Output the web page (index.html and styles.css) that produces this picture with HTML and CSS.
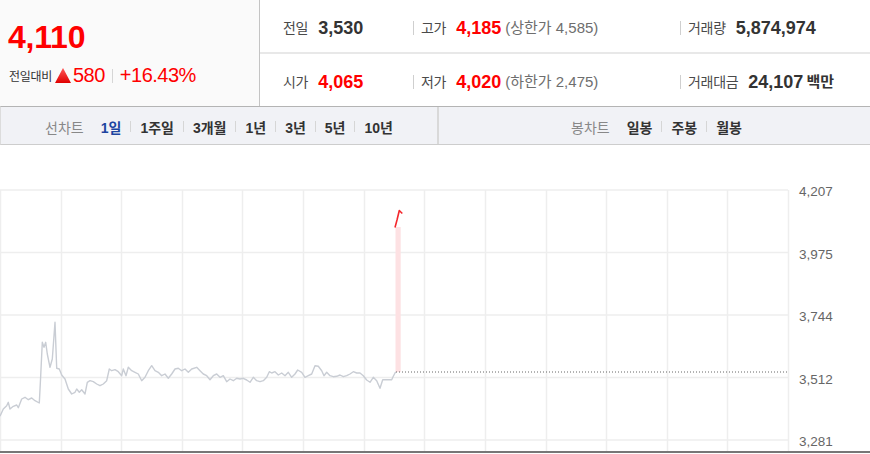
FILE: index.html
```html
<!DOCTYPE html>
<html lang="ko">

<head>
	<meta charset="UTF-8">
	<meta name="viewport" content="width=device-width, initial-scale=1.0">
	<title>시세</title>
	<link rel="stylesheet" href="styles.css">
</head>

<body>
	<div class="quote">
		<div class="now">
			<div class="price">4,110</div>
			<div class="change">
				<span class="change-label">전일대비</span>
				<svg class="tri" width="16" height="15" viewBox="0 0 16 15">
					<defs>
						<linearGradient id="triFill" x1="0" y1="0" x2="0" y2="1">
							<stop offset="0" stop-color="#ff5a5a"/>
							<stop offset="1" stop-color="#e00000"/>
						</linearGradient>
					</defs>
					<polygon points="8,0 16,15 0,15" fill="url(#triFill)"/>
				</svg>
				<span class="change-amt">580</span>
				<span class="change-bar"></span>
				<span class="change-rate">+16.43%</span>
			</div>
		</div>
		<div class="info">
			<div class="row first">
				<div class="cell c1"><span class="k">전일</span><b class="v">3,530</b></div>
				<div class="cell c2"><span class="sep"></span><span class="k">고가</span><b class="v up">4,185</b><span class="lim">(상한가 4,585)</span></div>
				<div class="cell c3"><span class="sep"></span><span class="k">거래량</span><b class="v">5,874,974</b></div>
			</div>
			<div class="row">
				<div class="cell c1"><span class="k">시가</span><b class="v up">4,065</b></div>
				<div class="cell c2"><span class="sep"></span><span class="k">저가</span><b class="v up">4,020</b><span class="lim">(하한가 2,475)</span></div>
				<div class="cell c3"><span class="sep"></span><span class="k">거래대금</span><b class="v">24,107</b><span class="unit">백만</span></div>
			</div>
		</div>
	</div>

	<div class="tabs">
		<div class="tab-group line">
			<span class="tab-title">선차트</span>
			<a class="tab on">1일</a><span class="tsep"></span>
			<a class="tab">1주일</a><span class="tsep"></span>
			<a class="tab">3개월</a><span class="tsep"></span>
			<a class="tab">1년</a><span class="tsep"></span>
			<a class="tab">3년</a><span class="tsep"></span>
			<a class="tab">5년</a><span class="tsep"></span>
			<a class="tab">10년</a>
		</div>
		<div class="tab-group candle">
			<span class="tab-title">봉차트</span>
			<a class="tab">일봉</a><span class="tsep"></span>
			<a class="tab">주봉</a><span class="tsep"></span>
			<a class="tab">월봉</a>
		</div>
	</div>

	<div class="chart">
		<svg id="chart" width="870" height="308" viewBox="0 0 870 308"></svg>
	</div>

	<script src="chart.js"></script>
</body>

</html>
```

FILE: styles.css
```css
html {
	font-size: 14px;
}

body {
	margin: 0;
	width: 870px;
	height: 454px;
	overflow: hidden;
	background: #fff;
	font-family: "Liberation Sans", "Noto Sans CJK KR", sans-serif;
	color: #333;
}

.quote {
	display: flex;
	height: 106px;
}

.now {
	width: 260px;
	flex: none;
	background: #fafafa;
	border-right: 1px solid #c4c4c4;
	padding: 19px 0 0 8px;
	box-sizing: border-box;
}

.price {
	color: #f00;
	font-size: 32px;
	font-weight: bold;
	line-height: 36px;
	letter-spacing: -0.2px;
}

.change {
	display: flex;
	align-items: center;
	margin-top: 9px;
	height: 22px;
}

.change-label {
	font-size: 12px;
	letter-spacing: -0.3px;
	color: #333;
	margin-right: 3px;
	margin-left: 1px;
}

.tri {
	margin-right: 2px;
	margin-top: 1px;
}

.change-amt,
.change-rate {
	color: #f00;
	font-size: 20px;
	line-height: 22px;
	letter-spacing: -0.5px;
}

.change-bar {
	width: 1px;
	height: 14px;
	background: #d6d6d6;
	margin: 2px 7px 0 7px;
}

.info {
	flex: 1;
}

.row {
	display: flex;
	height: 52px;
	align-items: center;
	padding-top: 3px;
	box-sizing: border-box;
}

.row.first {
	height: 54px;
	border-bottom: 2px solid #e8e8e8;
}

.cell {
	display: flex;
	align-items: center;
	line-height: 20px;
}

.c1 {
	width: 153px;
	padding-left: 23px;
	box-sizing: border-box;
}

.c2 {
	width: 267px;
}

.c3 {
	flex: 1;
}

.sep {
	width: 1px;
	height: 14px;
	background: #cfcfcf;
	margin-right: 7px;
}

.k {
	font-size: 14px;
	color: #4a4a4a;
	letter-spacing: -0.3px;
	margin-right: 10px;
}

.v {
	font-size: 18px;
	font-weight: bold;
	color: #333;
}

.v.up {
	color: #f00;
}

.lim {
	font-size: 15px;
	color: #6e6e6e;
	margin-left: 4px;
}

.unit {
	font-size: 15px;
	font-weight: bold;
	color: #333;
	margin-left: 3px;
}

.tabs {
	display: flex;
	height: 39px;
	background: #f1f2f6;
	border-top: 1px solid #b4b4b4;
	border-bottom: 1px solid #cdcdcd;
	border-left: 1px solid #dcdcdc;
	box-sizing: border-box;
}

.tab-group {
	display: flex;
	align-items: center;
	justify-content: center;
	padding-top: 2px;
}

.tab-group.line {
	width: 436px;
	border-right: 2px solid #d9d9d9;
}

.tab-group.candle {
	flex: 1;
	padding-left: 4px;
}

.tab-title {
	font-size: 14px;
	color: #888;
	margin-right: 17px;
}

.tab {
	font-size: 14px;
	font-weight: bold;
	color: #333;
}

.tab.on {
	color: #1d45a0;
}

.tsep {
	width: 1px;
	height: 11px;
	background: #d6d6d6;
	margin: 0 9px;
}

.chart {
	height: 308px;
}

.chart svg {
	display: block;
}

.grid {
	stroke: #eeeeee;
	stroke-width: 1.5;
}

.ylabel {
	font-family: "Liberation Sans", sans-serif;
	font-size: 13.5px;
	fill: #666;
}
```

FILE: chart.js
```js
const NS = "http://www.w3.org/2000/svg"
const svg = document.getElementById("chart")

function el(name, attrs) {
	const e = document.createElementNS(NS, name)
	Object.entries(attrs).forEach(([k, v]) => e.setAttribute(k, v))
	svg.appendChild(e)
	return e
}

// grid: 13 half-hour slots, 5 price levels
const right = 788
const labels = ["4,207", "3,975", "3,744", "3,512", "3,281"]
for (let i = 0; i <= 13; i++) {
	const x = Math.round(i * right / 13) + 0.5
	el("line", {x1: x, y1: 45, x2: x, y2: 306, class: "grid"})
}
labels.forEach((t, i) => {
	const y = 45 + i * 62.5
	el("line", {x1: 0, y1: y, x2: right, y2: y, class: "grid"})
	const label = el("text", {x: 799, y: y + 6, class: "ylabel"})
	label.textContent = t
})

// intraday price (traced at 3x scale)
const pts = [
	[0,712],[10,690],[20,680],[25,670],[30,690],[40,682],[50,678],[55,686],[65,660],[75,655],
	[85,662],[95,657],[105,665],[118,672],[122,590],[127,490],[132,505],[137,490],[142,525],[150,565],
	[157,540],[165,430],[170,568],[178,570],[185,588],[195,600],[205,630],[215,645],[225,640],[230,630],
	[238,640],[245,632],[255,645],[262,610],[270,605],[280,608],[290,615],[300,620],[310,615],[320,605],
	[328,570],[335,575],[345,572],[355,578],[365,590],[370,570],[378,590],[385,565],[395,575],[405,580],
	[415,585],[425,605],[435,595],[445,575],[455,560],[465,575],[475,580],[485,590],[495,585],[505,598],
	[515,585],[525,570],[535,568],[545,575],[555,570],[565,580],[575,570],[590,565],[600,575],[610,585],
	[620,590],[630,602],[640,590],[650,585],[660,595],[670,590],[680,608],[690,600],[700,605],[710,598],
	[720,600],[730,598],[740,603],[750,610],[760,595],[770,605],[780,608],[790,605],[800,595],[808,578],
	[815,582],[825,578],[835,588],[845,582],[855,590],[865,580],[875,595],[885,585],[893,573],[905,580],
	[915,595],[925,590],[935,585],[945,560],[955,562],[965,575],[972,590],[980,580],[990,590],[1000,593],
	[1010,592],[1020,588],[1030,593],[1040,590],[1050,585],[1060,578],[1070,582],[1080,582],[1090,590],[1100,603],
	[1110,610],[1120,595],[1130,605],[1140,628],[1148,602],[1160,602],[1175,602],[1180,592],[1187,578]
]
const line = pts.map(([x, y]) => `${(x / 3).toFixed(1)},${(y / 3 + 34).toFixed(1)}`).join(" ")
el("polyline", {points: line, fill: "none", stroke: "#c9cdd4", "stroke-width": 1.4, "stroke-linejoin": "round"})

// today's jump
el("rect", {x: 395.5, y: 82, width: 5.2, height: 145, fill: "#fde1e3"})
el("line", {x1: 396, y1: 227, x2: right, y2: 227, stroke: "#666", "stroke-width": 1, "stroke-dasharray": "1 2"})
el("polyline", {points: "395,82.5 397,75 399.3,65.5 402.3,68.5", fill: "none", stroke: "#f4282d", "stroke-width": 1.6, "stroke-linejoin": "round"})

// bottom axis line
el("rect", {x: 0, y: 306, width: 870, height: 2, fill: "#777"})
```
